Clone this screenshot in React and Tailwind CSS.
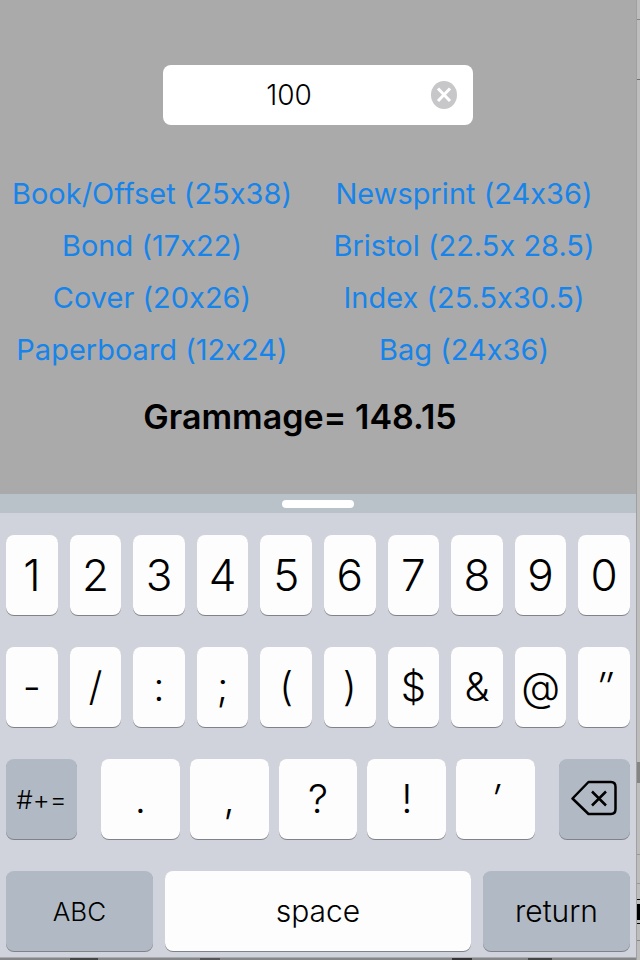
import React, { useState } from 'react';

const papers = [
  { name: 'Book/Offset (25x38)', area: 950 },
  { name: 'Newsprint (24x36)', area: 864 },
  { name: 'Bond (17x22)', area: 374 },
  { name: 'Bristol (22.5x 28.5)', area: 641.25 },
  { name: 'Cover (20x26)', area: 520 },
  { name: 'Index (25.5x30.5)', area: 777.75 },
  { name: 'Paperboard (12x24)', area: 288 },
  { name: 'Bag (24x36)', area: 864 },
];

const digits = ['1', '2', '3', '4', '5', '6', '7', '8', '9', '0'];
const symbols = ['-', '/', ':', ';', '(', ')', '$', '&', '@', '″'];
const marks = ['.', ',', '?', '!', '′'];

const Key = ({ dark, className = '', children, ...rest }) => (
  <button
    type="button"
    className={`h-20 rounded-lg flex items-center justify-center text-black shadow-[0_1px_0_#808287] ${dark ? 'bg-[#b1bac4]' : 'bg-[#fdfdfe]'} ${className}`}
    {...rest}
  >
    {children}
  </button>
);

const DeleteIcon = () => (
  <svg width="48" height="38" viewBox="0 0 48 38" fill="none" stroke="black" aria-hidden="true">
    <path d="M17.5 2 H40 Q44.5 2 44.5 7 V29 Q44.5 34 40 34 H17.5 L1.5 18.5 Z" strokeWidth="2.5" strokeLinejoin="round" />
    <path d="M21 11.5 L35 25.5 M35 11.5 L21 25.5" strokeWidth="2.5" />
  </svg>
);

const ClearIcon = () => (
  <svg width="26" height="28" viewBox="0 0 26 28" aria-hidden="true">
    <ellipse cx="13" cy="14" rx="13" ry="14" fill="#c7c7c9" />
    <path d="M7 7.5 L19 20 M19 7.5 L7 20" stroke="white" strokeWidth="3" />
  </svg>
);

// sliver of the page behind the phone, right side
const RightEdge = () => (
  <div className="w-1 shrink-0 bg-[#bdbdbd] border-l border-[#a0a0a2] flex flex-col">
    <div className="h-[19px]" />
    <div className="h-px bg-[#858585]" />
    <div className="h-[59px]" />
    <div className="h-px bg-[#707070]" />
    <div className="h-[682px]" />
    <div className="h-[21px] bg-[#858585]" />
    <div className="h-[71px]" />
    <div className="h-px bg-[#999999]" />
    <div className="h-7" />
    <div className="h-px bg-[#999999]" />
    <div className="h-[15px]" />
    <div className="h-px bg-black" />
    <div className="h-1" />
    <div className="h-4 bg-black" />
    <div className="h-[3px]" />
    <div className="h-px bg-black" />
    <div className="h-4" />
    <div className="h-px bg-[#858585]" />
  </div>
);

export default function App() {
  const [value, setValue] = useState('100');
  const [paper, setPaper] = useState(papers[0]);

  const grammage = ((Number(value) || 0) * 1407.425) / paper.area;
  const type = (ch) => setValue(value + ch);

  return (
    <div className="min-h-screen flex bg-[#aaaaaa] font-['Inter',sans-serif] [font-variant-ligatures:no-contextual] text-black">
      <div className="flex-1 min-w-0 flex flex-col">
        <main className="flex-1 flex flex-col pt-[65px]">
          <div className="self-center w-[310px] h-15 rounded-lg bg-white flex items-center pr-4">
            <input
              aria-label="Basis weight"
              value={value}
              onChange={(e) => setValue(e.target.value)}
              className="flex-1 min-w-0 pr-4 text-center text-[28px] leading-8 font-[350] bg-transparent outline-none"
            />
            <button type="button" aria-label="Clear" onClick={() => setValue('')}>
              <ClearIcon />
            </button>
          </div>

          <div className="mt-[43px] pr-5 grid grid-cols-2 gap-x-2">
            {papers.map((p) => (
              <button
                key={p.name}
                type="button"
                onClick={() => setPaper(p)}
                className="h-13 text-[29px] leading-8 whitespace-nowrap text-[#1684ea]"
              >
                {p.name}
              </button>
            ))}
          </div>

          <p className="mt-[21px] pr-9 text-center text-[34px] leading-10 font-semibold">
            Grammage= {grammage.toFixed(2)}
          </p>
        </main>

        <section aria-label="Keyboard" className="bg-[#d0d3dc]">
          <div className="h-[19px] bg-[#b9c1c9] flex items-center justify-center">
            <div className="w-18 h-2 rounded-full bg-white" />
          </div>

          <div className="px-[6px] pt-[22px] pb-[6px] flex flex-col gap-8">
            <div className="grid grid-cols-10 gap-3">
              {digits.map((d) => (
                <Key key={d} className="text-[44px] font-[350]" onClick={() => type(d)}>{d}</Key>
              ))}
            </div>
            <div className="grid grid-cols-10 gap-3">
              {symbols.map((s) => (
                <Key key={s} className={`text-[40px] font-[350] ${s === '″' ? 'italic' : ''}`} onClick={() => type(s)}>{s}</Key>
              ))}
            </div>
            <div className="flex gap-6">
              <Key dark className="w-[71px] text-[26px] font-light">#+=</Key>
              <div className="flex-1 grid grid-cols-5 gap-[10px]">
                {marks.map((m) => (
                  <Key key={m} className={`text-[40px] font-[350] ${m === '′' ? 'italic' : ''}`} onClick={() => type(m)}>{m}</Key>
                ))}
              </div>
              <Key dark className="w-[71px]" aria-label="Delete" onClick={() => setValue(value.slice(0, -1))}>
                <DeleteIcon />
              </Key>
            </div>
            <div className="flex gap-3">
              <Key dark className="w-[147px] text-[26px] font-light">ABC</Key>
              <Key className="flex-1 text-[30px] font-[350]" onClick={() => type(' ')}>space</Key>
              <Key dark className="w-[147px] text-[30px] font-[350]">return</Key>
            </div>
          </div>
          <div className="h-[3px] bg-[#858688] border-t border-[#a9abaf] flex">
            <div className="ml-[70px] w-7 bg-[#444444]" />
            <div className="ml-[102px] w-5 bg-[#555555]" />
            <div className="ml-[232px] w-5 bg-[#333333]" />
            <div className="ml-[56px] w-6 bg-[#444444]" />
          </div>
        </section>
      </div>
      <RightEdge />
    </div>
  );
}
